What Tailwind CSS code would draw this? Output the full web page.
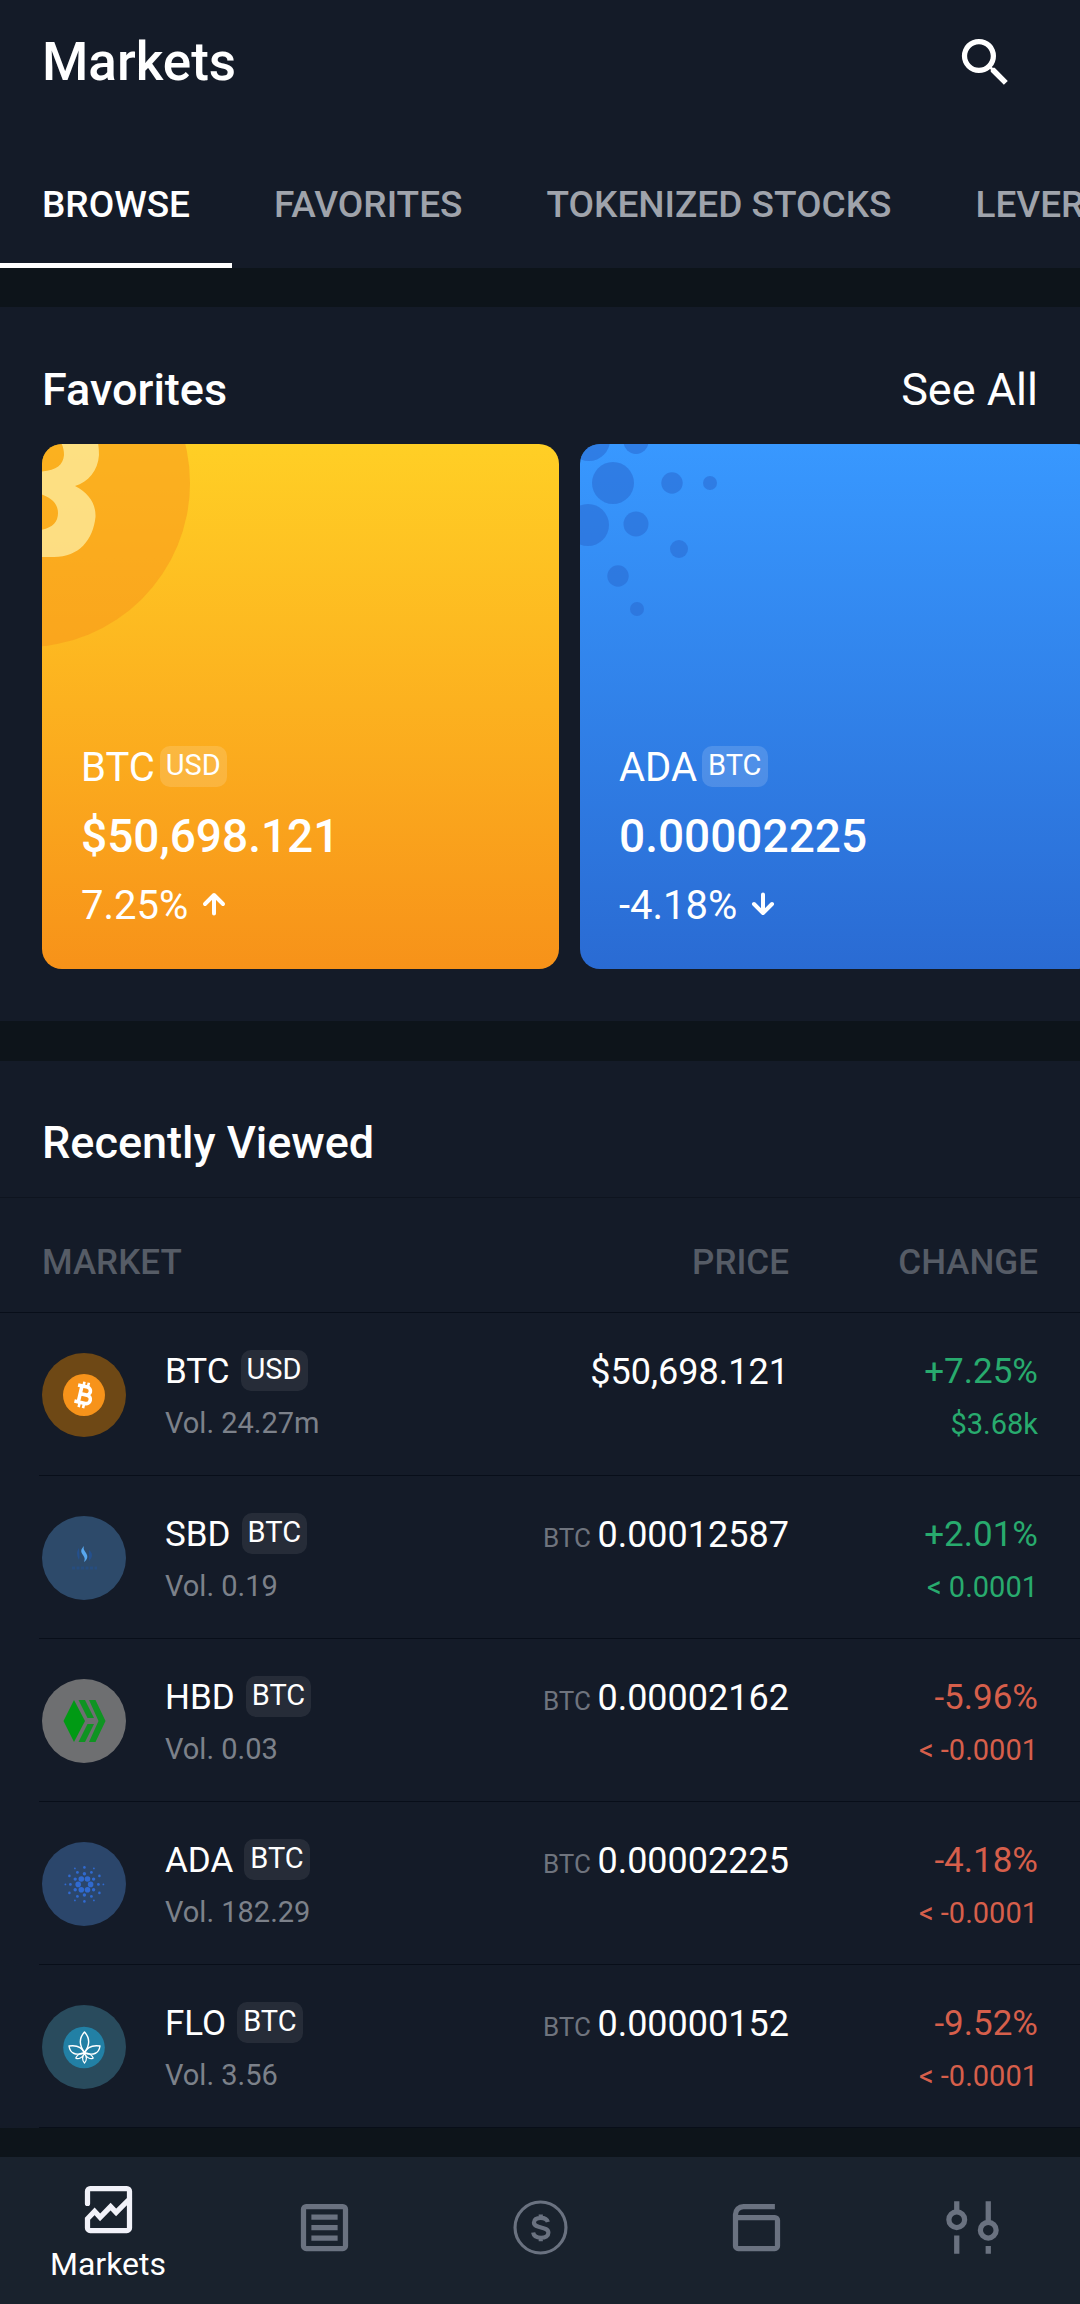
<!DOCTYPE html>
<html lang="en">
<head>
<meta charset="utf-8">
<meta name="viewport" content="width=device-width, initial-scale=1">
<title>Markets</title>
<script src="https://cdn.jsdelivr.net/npm/@tailwindcss/browser@4"></script>
</head>
<body class="flex min-h-screen flex-col overflow-x-hidden bg-[#0d141a] font-['Roboto',sans-serif] text-white">

<header class="bg-[#141b28]">
  <div class="flex h-[124px] items-center justify-between pr-[63px] pl-[42px]">
    <h1 class="pt-0.5 text-[53px] font-medium">Markets</h1>
    <button type="button" aria-label="Search">
      <svg class="size-[63px]" viewBox="0 0 24 24" fill="currentColor"><path d="M15.5 14h-.79l-.28-.27A6.47 6.47 0 0 0 16 9.5 6.5 6.5 0 1 0 9.5 16c1.61 0 3.09-.59 4.23-1.57l.27.28v.79l5 4.99L20.49 19l-4.99-5zm-6 0C7.01 14 5 11.99 5 9.5S7.01 5 9.5 5 14 7.01 14 9.5 11.99 14 9.5 14z"/></svg>
    </button>
  </div>
  <nav aria-label="Market lists" class="flex h-36 overflow-hidden text-[37px] font-medium whitespace-nowrap text-[#9fa3ab]">
    <a href="#" aria-current="page" class="flex items-center border-b-5 border-white px-[42px] pt-[22px] text-white">BROWSE</a>
    <a href="#" class="flex items-center border-b-5 border-transparent px-[42px] pt-[22px]">FAVORITES</a>
    <a href="#" class="flex items-center border-b-5 border-transparent px-[42px] pt-[22px]">TOKENIZED STOCKS</a>
    <a href="#" class="flex items-center border-b-5 border-transparent px-[42px] pt-[22px]">LEVERAGED TOKENS</a>
  </nav>
</header>

<main class="mt-[39px]">
  <section class="bg-[#141b28] pt-7 pb-[52px]">
    <div class="flex h-[109px] items-center justify-between px-[42px] text-[45px]">
      <h2 class="font-medium">Favorites</h2>
      <a href="#">See All</a>
    </div>
    <div class="flex gap-[21px] overflow-hidden pl-[42px]">
      <article class="relative flex h-[525px] w-[517px] shrink-0 flex-col justify-end overflow-hidden rounded-[20px] bg-linear-to-b from-[#ffcf25] to-[#f79219] px-[39px] pb-7">
        <svg class="absolute top-0 left-0 size-[240px]" viewBox="0 0 240 240">
          <circle cx="-16" cy="39" r="164" fill="#f7931a" fill-opacity=".5"/>
          <path fill="#ffffc4" fill-opacity=".6" fill-rule="evenodd" d="M-10-20H48C55-11 57 0 57 11 56 27 46 38 33 42 47 49 54 60 53.500 73 51 96 37 113 12 113H-10ZM-10-10H12C19-4 22 3 22 11 21 23 12 28-10 28ZM-10 48C8 51 16 59 16 69 16 80 8 86-10 87Z"/>
        </svg>
        <div class="flex h-[66px] items-center gap-[5px]">
          <h3 class="text-[40px]">BTC</h3>
          <span class="mb-1 flex h-[41px] items-center rounded-[10px] bg-white/15 px-[6px] text-[29px]">USD</span>
        </div>
        <p class="flex h-[70px] items-center text-[46px] font-medium">$50,698.121</p>
        <p class="flex h-[70px] items-center gap-3 text-[40px]">7.25%
          <svg class="mb-1 size-7" viewBox="0 0 28 28" fill="none" stroke="currentColor" stroke-width="4" stroke-linecap="round" stroke-linejoin="round"><path d="M14 23.500V5.500M5 14l9-9 9 9"/></svg>
        </p>
      </article>
      <article class="relative flex h-[525px] w-[517px] shrink-0 flex-col justify-end overflow-hidden rounded-[20px] bg-linear-to-b from-[#3898ff] to-[#2a6bd3] px-[39px] pb-7">
        <svg class="absolute top-0 left-0 size-[240px]" viewBox="0 0 240 240" fill="#2a6bd3" fill-opacity=".58">
          <circle cx="9" cy="-4" r="21"/><circle cx="56" cy="-2.500" r="12.500"/><circle cx="33" cy="39" r="21"/><circle cx="92" cy="39" r="10.700"/><circle cx="130" cy="39" r="7"/><circle cx="8" cy="81" r="21"/><circle cx="56" cy="80" r="12.500"/><circle cx="99" cy="105" r="9"/><circle cx="38" cy="132" r="10.700"/><circle cx="57" cy="165" r="7"/>
        </svg>
        <div class="flex h-[66px] items-center gap-[5px]">
          <h3 class="text-[40px]">ADA</h3>
          <span class="mb-1 flex h-[41px] items-center rounded-[10px] bg-white/15 px-[6px] text-[29px]">BTC</span>
        </div>
        <p class="flex h-[70px] items-center text-[46px] font-medium">0.00002225</p>
        <p class="flex h-[70px] items-center gap-3 text-[40px]">-4.18%
          <svg class="mb-1 size-7" viewBox="0 0 28 28" fill="none" stroke="currentColor" stroke-width="4" stroke-linecap="round" stroke-linejoin="round"><path d="M14 4.500v18M5 14l9 9 9-9"/></svg>
        </p>
      </article>
    </div>
  </section>

  <section class="mt-10 bg-[#141b28]">
    <div class="border-b border-[#0e141f] pt-7">
      <h2 class="flex h-27 items-center px-[42px] text-[45px] font-medium">Recently Viewed</h2>
    </div>
    <table class="w-full border-separate border-spacing-0">
      <thead>
        <tr class="h-[115px] text-[35px] text-[#565c66]">
          <th scope="col" class="border-b border-[#080e19] pt-4 pl-[42px] text-left font-medium">MARKET</th>
          <th scope="col" class="border-b border-[#080e19] pt-4 text-right font-medium">PRICE</th>
          <th scope="col" class="w-[291px] border-b border-[#080e19] pt-4 pr-[42px] text-right font-medium">CHANGE</th>
        </tr>
      </thead>
      <tbody class="text-[35px]">
        <tr>
          <td class="p-0">
            <div class="ml-[39px] flex h-[163px] items-center gap-[39px] border-b border-[#080e19] pt-0.5 pl-[3px]">
              <svg class="size-[84px]" viewBox="0 0 84 84"><circle cx="42" cy="42" r="42" fill="#6e4815"/><circle cx="42" cy="42" r="21" fill="#f7931a"/>
                <g transform="rotate(13 42 42)" fill="none" stroke="#fff" stroke-width="3.600"><path d="M34 33.500h9.500a4 4 0 0 1 0 8h-6h7.500a4.200 4.200 0 0 1 0 8.500H34M38 33.500V50"/><path stroke-width="2.600" d="M39.500 29v4M44 29v4M39.500 50.500v4.500M44 50.500v4.500"/></g></svg>
              <div class="pt-1.5">
                <div class="flex h-[52px] items-center gap-[11px]">BTC <span class="mb-1 flex h-[41px] items-center rounded-[10px] bg-white/8 px-[6px] text-[29px]">USD</span></div>
                <div class="flex h-[52px] items-center text-[29px] text-[#7c818a]">Vol. 24.27m</div>
              </div>
            </div>
          </td>
          <td class="border-b border-[#080e19] pt-[33px] text-right align-top text-[36px]"><div class="leading-[52px]">$50,698.121</div></td>
          <td class="border-b border-[#080e19] pt-[33px] pr-[42px] text-right align-top text-[#28ab6e]"><div class="leading-[52px]">+7.25%</div><div class="text-[29px] leading-[52px]">$3.68k</div></td>
        </tr>
        <tr>
          <td class="p-0">
            <div class="ml-[39px] flex h-[163px] items-center gap-[39px] border-b border-[#080e19] pt-0.5 pl-[3px]">
              <svg class="size-[84px]" viewBox="0 0 84 84"><circle cx="42" cy="42" r="42" fill="#2d4a6a"/>
                <path fill="#24508d" d="M37 32c-3 4-2 8 0 12 1-3 0-7 0-12zM47 34c4 3 4 7 0 11 0-4 0-7 0-11z"/><path fill="#58a7ee" d="M42 30c-4 4-3 6-1 9s2 4 1 7c4-3 4-6 2-9s-3-4-2-7z"/><path stroke="#24508d" stroke-width="3" stroke-dasharray="3 1.500" opacity=".6" d="M30 52h25"/></svg>
              <div class="pt-1.5">
                <div class="flex h-[52px] items-center gap-[11px]">SBD <span class="mb-1 flex h-[41px] items-center rounded-[10px] bg-white/8 px-[6px] text-[29px]">BTC</span></div>
                <div class="flex h-[52px] items-center text-[29px] text-[#7c818a]">Vol. 0.19</div>
              </div>
            </div>
          </td>
          <td class="border-b border-[#080e19] pt-[33px] text-right align-top text-[36px]"><div class="leading-[52px]"><span class="text-[26px] text-[#6f747e]">BTC </span>0.00012587</div></td>
          <td class="border-b border-[#080e19] pt-[33px] pr-[42px] text-right align-top text-[#28ab6e]"><div class="leading-[52px]">+2.01%</div><div class="text-[29px] leading-[52px]">&lt; 0.0001</div></td>
        </tr>
        <tr>
          <td class="p-0">
            <div class="ml-[39px] flex h-[163px] items-center gap-[39px] border-b border-[#080e19] pt-0.5 pl-[3px]">
              <svg class="size-[84px]" viewBox="0 0 84 84"><circle cx="42" cy="42" r="42" fill="#6e6f71"/><path fill="#009a14" d="M32 21 21.500 42 32 63 43 42z"/><path fill="#0f9422" d="M36.500 21H43l9 18h-6.500zM47 21h6.500L63.500 42l-10 21H47l9.500-21zM45.500 45H52l-9 18h-6.500z"/></svg>
              <div class="pt-1.5">
                <div class="flex h-[52px] items-center gap-[11px]">HBD <span class="mb-1 flex h-[41px] items-center rounded-[10px] bg-white/8 px-[6px] text-[29px]">BTC</span></div>
                <div class="flex h-[52px] items-center text-[29px] text-[#7c818a]">Vol. 0.03</div>
              </div>
            </div>
          </td>
          <td class="border-b border-[#080e19] pt-[33px] text-right align-top text-[36px]"><div class="leading-[52px]"><span class="text-[26px] text-[#6f747e]">BTC </span>0.00002162</div></td>
          <td class="border-b border-[#080e19] pt-[33px] pr-[42px] text-right align-top text-[#d65f4b]"><div class="leading-[52px]">-5.96%</div><div class="text-[29px] leading-[52px]">&lt; -0.0001</div></td>
        </tr>
        <tr>
          <td class="p-0">
            <div class="ml-[39px] flex h-[163px] items-center gap-[39px] border-b border-[#080e19] pt-0.5 pl-[3px]">
              <svg class="size-[84px]" viewBox="0 0 84 84"><circle cx="42" cy="42" r="42" fill="#2b466b"/>
                <g fill="#306ad0" transform="translate(.4 .4)">
                  <circle cx="48.200" cy="42" r="2.800"/><circle cx="45.100" cy="47.400" r="2.800"/><circle cx="38.900" cy="47.400" r="2.800"/><circle cx="35.800" cy="42" r="2.800"/><circle cx="38.900" cy="36.600" r="2.800"/><circle cx="45.100" cy="36.600" r="2.800"/>
                  <circle cx="42" cy="31.400" r="1.700"/><circle cx="51.200" cy="36.700" r="1.700"/><circle cx="51.200" cy="47.300" r="1.700"/><circle cx="42" cy="52.600" r="1.700"/><circle cx="32.800" cy="47.300" r="1.700"/><circle cx="32.800" cy="36.700" r="1.700"/>
                  <circle cx="56" cy="42" r="1.400"/><circle cx="49" cy="54" r="1.400"/><circle cx="35" cy="54" r="1.400"/><circle cx="28" cy="42" r="1.400"/><circle cx="35" cy="30" r="1.400"/><circle cx="49" cy="30" r="1.400"/>
                  <circle cx="42" cy="25" r="1.300"/><circle cx="57" cy="33.500" r="1.300"/><circle cx="57" cy="50.500" r="1.300"/><circle cx="42" cy="59" r="1.300"/><circle cx="27" cy="50.500" r="1.300"/><circle cx="27" cy="33.500" r="1.300"/>
                  <circle cx="61" cy="42" r=".9"/><circle cx="51.500" cy="58" r=".9"/><circle cx="32.500" cy="58" r=".9"/><circle cx="23" cy="42" r=".9"/><circle cx="32.500" cy="26" r=".9"/><circle cx="51.500" cy="26" r=".9"/>
                </g></svg>
              <div class="pt-1.5">
                <div class="flex h-[52px] items-center gap-[11px]">ADA <span class="mb-1 flex h-[41px] items-center rounded-[10px] bg-white/8 px-[6px] text-[29px]">BTC</span></div>
                <div class="flex h-[52px] items-center text-[29px] text-[#7c818a]">Vol. 182.29</div>
              </div>
            </div>
          </td>
          <td class="border-b border-[#080e19] pt-[33px] text-right align-top text-[36px]"><div class="leading-[52px]"><span class="text-[26px] text-[#6f747e]">BTC </span>0.00002225</div></td>
          <td class="border-b border-[#080e19] pt-[33px] pr-[42px] text-right align-top text-[#d65f4b]"><div class="leading-[52px]">-4.18%</div><div class="text-[29px] leading-[52px]">&lt; -0.0001</div></td>
        </tr>
        <tr>
          <td class="p-0">
            <div class="ml-[39px] flex h-[163px] items-center gap-[39px] border-b border-[#080e19] pt-0.5 pl-[3px]">
              <svg class="size-[84px]" viewBox="0 0 84 84"><circle cx="42" cy="42" r="42" fill="#294b5d"/><circle cx="42" cy="42.500" r="20.800" fill="#2280a5"/>
                <g fill="none" stroke="#fff" stroke-width="1.400" stroke-linejoin="round"><path d="M42.500 47.500C37 40 37 33 42.500 27c5.500 6 5.500 13 0 20.500z"/><path d="M42.500 48C40 42 34 40 27 41c1 7 6 10 15.500 7zM42.500 48C45 42 51 40 58 41c-1 7-6 10-15.500 7z"/><path d="M42 48c-4 0-7 2-8.500 5.500M43 48c4 0 7 2 8.500 5.500M42.500 48.500c-2.500 3-2.500 7 0 9.500 2.500-2.500 2.500-6.500 0-9.500zM34 53.500c3 .5 5.500-.5 7.500-3.500M51 53.500c-3 .5-5.500-.5-7.500-3.500" stroke-width="1.200"/></g></svg>
              <div class="pt-1.5">
                <div class="flex h-[52px] items-center gap-[11px]">FLO <span class="mb-1 flex h-[41px] items-center rounded-[10px] bg-white/8 px-[6px] text-[29px]">BTC</span></div>
                <div class="flex h-[52px] items-center text-[29px] text-[#7c818a]">Vol. 3.56</div>
              </div>
            </div>
          </td>
          <td class="border-b border-[#080e19] pt-[33px] text-right align-top text-[36px]"><div class="leading-[52px]"><span class="text-[26px] text-[#6f747e]">BTC </span>0.00000152</div></td>
          <td class="border-b border-[#080e19] pt-[33px] pr-[42px] text-right align-top text-[#d65f4b]"><div class="leading-[52px]">-9.52%</div><div class="text-[29px] leading-[52px]">&lt; -0.0001</div></td>
        </tr>
      </tbody>
    </table>
  </section>
</main>

<nav aria-label="Main" class="mt-auto grid h-[147px] grid-cols-5 bg-[#19222d] text-[#6a7280]">
  <a href="#" aria-current="page" class="flex flex-col items-center pt-[21px] text-white">
    <svg class="size-[63px] text-[#f1f2f9]" viewBox="0 0 24 24" fill="none" stroke="currentColor" stroke-width="2" stroke-linecap="round"><path d="M4 9.700V5a1 1 0 0 1 1-1h14a1 1 0 0 1 1 1v14a1 1 0 0 1-1 1H5a1 1 0 0 1-1-1v-3.500l2.700-2.800 2.100 2.300 4-4.100 2.100 2.200L20 8"/></svg>
    <span class="text-[32px] leading-[46px]">Markets</span>
  </a>
  <a href="#" aria-label="Orders" class="flex items-center justify-center pb-1.5">
    <svg class="size-[63px]" viewBox="0 0 24 24" fill="none" stroke="currentColor" stroke-width="2"><rect x="4" y="4" width="16" height="16" rx="1"/><path d="M7 8h10M7 12h10M7 16h10"/></svg>
  </a>
  <a href="#" aria-label="Trade" class="flex items-center justify-center pb-1.5">
    <svg class="size-[63px]" viewBox="0 0 24 24" fill="none" stroke="currentColor"><circle cx="12" cy="12" r="9.700" stroke-width="1.200"/><path stroke-width="1.600" d="M14.800 9.900C14.500 8.800 13.500 8.300 12.100 8.300c-1.600 0-2.600.7-2.600 1.800 0 2.600 5.500 1.200 5.500 3.900 0 1.200-1.100 1.900-2.800 1.900-1.700 0-2.800-.7-3-2M12.100 7v1.500M12.100 15.700v1.500"/></svg>
  </a>
  <a href="#" aria-label="Wallet" class="flex items-center justify-center pb-1.5">
    <svg class="size-[63px]" viewBox="0 0 24 24" fill="none" stroke="currentColor" stroke-width="2"><path d="M19 4H7a3 3 0 0 0-3 3v12a1 1 0 0 0 1 1h14a1 1 0 0 0 1-1V9.200a1 1 0 0 0-1-1H4"/></svg>
  </a>
  <a href="#" aria-label="Settings" class="flex items-center justify-center pb-1.5">
    <svg class="size-[63px]" viewBox="0 0 24 24" fill="none" stroke="currentColor" stroke-width="2"><circle cx="6" cy="9" r="3"/><circle cx="18" cy="13" r="3"/><path d="M6 2v4M6 15v7M18 2v8M18 19v3"/></svg>
  </a>
</nav>
</body>
</html>
